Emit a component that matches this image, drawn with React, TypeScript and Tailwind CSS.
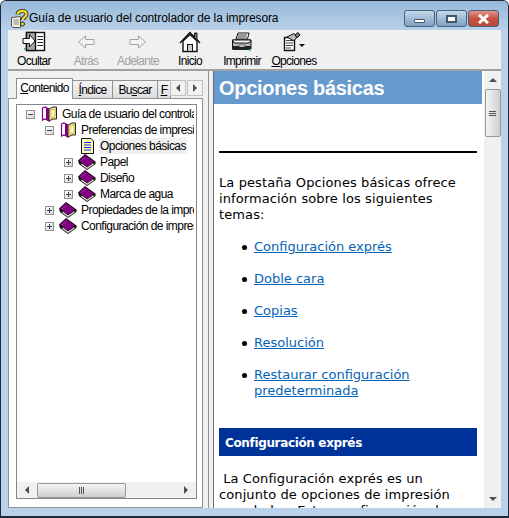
import type { ReactNode } from "react";

const ui = "font-['Liberation_Sans',Arial,sans-serif]";

const HelpIcon = () => (
  <svg width="20" height="20" viewBox="0 0 20 20">
    <path d="M1.5 8.5 L10.5 7.5 V18.5 H3 L1.5 17 Z" fill="#f4efe0" stroke="#555" />
    <path d="M3.5 11 H9 M3.5 13 H9 M3.5 15 H9" stroke="#888" />
    <path d="M7.5 5.5 C8 1.5 16.5 .5 16.5 5 C16.5 8 13 8 12.5 11" fill="none" stroke="#222" strokeWidth="4" />
    <path d="M7.5 5.5 C8 1.5 16.5 .5 16.5 5 C16.5 8 13 8 12.5 11" fill="none" stroke="#f2d92c" strokeWidth="2.4" />
    <circle cx="12.5" cy="15" r="2" fill="#f2d92c" stroke="#222" />
  </svg>
);

const HideIcon = () => (
  <svg width="24" height="22" viewBox="0 0 24 22">
    <rect x="4.5" y="1.5" width="18" height="18" fill="#fff" stroke="#111" strokeWidth="1.4" />
    <rect x="4.5" y="1.5" width="9" height="18" fill="#a8a8a8" stroke="#111" strokeWidth="1.4" />
    <path d="M15.5 5.5 H21 M15.5 8.5 H21 M15.5 11.5 H21 M15.5 14.5 H21" stroke="#222" />
    <path d="M1 7.5 H7.5 V3.5 L13 10 L7.5 16 V12.5 H1 Z" fill="#fff" stroke="#111" />
    <rect x="2" y="17" width="2" height="2" fill="#5cb85c" />
  </svg>
);

const ArrowIcon = ({ right }: { right?: boolean }) => (
  <svg width="18" height="14" viewBox="0 0 18 14">
    <path
      d={right ? "M1 4.5 H9.5 V1 L16.5 7 L9.5 13 V9.5 H1 Z" : "M17 4.5 H8.5 V1 L1.5 7 L8.5 13 V9.5 H17 Z"}
      fill="#f3f3f3"
      stroke="#a4a4a4"
    />
  </svg>
);

const HomeIcon = () => (
  <svg width="22" height="22" viewBox="0 0 22 22">
    <path d="M1 12 L11 1.5 L21 12" fill="#fff" stroke="#111" strokeWidth="1.4" />
    <path d="M15.5 6 V2 H18 V9" fill="#777" stroke="#111" />
    <path d="M4 10 V20.5 H18 V10 L11 3.5 Z" fill="#fff" stroke="#111" strokeWidth="1.4" />
    <rect x="8.5" y="13.5" width="5" height="7" fill="#ccc" stroke="#111" />
  </svg>
);

const PrinterIcon = () => (
  <svg width="22" height="20" viewBox="0 0 22 20">
    <path d="M5 7 L7 1 H18 L16.5 7 Z" fill="#fff" stroke="#111" />
    <path d="M7 3 H16 M6.5 5 H15.5" stroke="#333" />
    <path d="M1.5 8 H20 V17 H1.5 Z" fill="#bdbdbd" stroke="#111" />
    <path d="M1.5 8 H20 L18 11 H3 Z" fill="#fff" stroke="#111" />
    <rect x="1.5" y="14" width="18.5" height="4" fill="#222" />
    <rect x="8" y="13" width="6" height="2" fill="#eee" stroke="#111" strokeWidth=".5" />
    <rect x="18" y="17" width="2" height="2" fill="#33b5c9" />
  </svg>
);

const OptionsIcon = () => (
  <svg width="26" height="20" viewBox="0 0 26 20">
    <path d="M3.5 5.5 H13.5 V18.5 H3.5 Z" fill="#fff" stroke="#111" strokeWidth="1.4" />
    <path d="M5 8.5 H12 M5 11 H12 M5 13.5 H12 M5 16 H10" stroke="#444" />
    <path d="M6 5 L13 1.5 L16 5 L13 9 Z" fill="#bbb" stroke="#111" />
    <path d="M14 3 L17 .5 L19 3 L16 6 Z" fill="#777" stroke="#111" />
    <path d="M18 12 H24 L21 15 Z" fill="#111" />
  </svg>
);

const ClosedBook = () => (
  <svg width="18" height="16" viewBox="0 0 18 16">
    <path d="M0 6.5 L7 0 L17.5 7.5 V10 L9 16 L1 10 Z" fill="#111" />
    <path d="M1.2 6.5 L7 1.2 L16 7.5 L9 13 Z" fill="#800080" />
    <path d="M3.5 10 L9 14.2 L15.5 9.7" fill="none" stroke="#e8e8e8" strokeWidth="1.2" />
    <path d="M3 7 L7.5 3" stroke="#a830a8" />
  </svg>
);

const OpenBook = () => (
  <svg width="17" height="16" viewBox="0 0 17 16">
    <path d="M1.5 2 L4 1 L8 3 V15 L4 13 L1.5 14 Z" fill="#fff" stroke="#800080" strokeWidth="1.2" />
    <path d="M8 3 L12 1 H15.5 V13 H12 L8 15 Z" fill="#f5e884" stroke="#222" />
    <path d="M5 1.5 C7 2 8 3 8 4 V15 L5 13 Z" fill="#800080" />
    <path d="M10 4 L14 3 V11 L10 12 Z" fill="#fff7b0" stroke="#a89b3c" strokeWidth=".6" />
  </svg>
);

const Page = () => (
  <svg width="13" height="16" viewBox="0 0 13 16">
    <path d="M.5 .5 H10 L12.5 3 V15.5 H.5 Z" fill="#fffbb8" stroke="#111" />
    <path d="M3 4.5 H10 M3 7 H10 M3 9.5 H10 M3 12 H10" stroke="#1030d0" strokeWidth="1.2" />
  </svg>
);

const Expander = ({ open }: { open?: boolean }) => (
  <span className="relative flex h-[9px] w-[9px] shrink-0 items-center justify-center border border-[#919191] bg-gradient-to-br from-white to-[#d8d8d0]">
    <span className="h-px w-[5px] bg-[#33406a]" />
    {!open && <span className="absolute h-[5px] w-px bg-[#33406a]" />}
  </span>
);

type Node = { label: string; level: number; kind: "open" | "closed" | "page"; selected?: boolean };

const tree: Node[] = [
  { label: "Guía de usuario del controlador de la impresora", level: 0, kind: "open" },
  { label: "Preferencias de impresión", level: 1, kind: "open" },
  { label: "Opciones básicas", level: 2, kind: "page", selected: true },
  { label: "Papel", level: 2, kind: "closed" },
  { label: "Diseño", level: 2, kind: "closed" },
  { label: "Marca de agua", level: 2, kind: "closed" },
  { label: "Propiedades de la impresora", level: 1, kind: "closed" },
  { label: "Configuración de impresión", level: 1, kind: "closed" },
];

const indents = ["pl-[9px]", "pl-[28px]", "pl-[47px]"];

const TreeRow = ({ node }: { node: Node }) => (
  <div className={`flex h-4 items-center whitespace-nowrap ${indents[node.level]}`}>
    <span className="flex w-[14px] shrink-0 items-center">
      {node.kind !== "page" && <Expander open={node.kind === "open"} />}
    </span>
    <span className="flex w-[18px] shrink-0 justify-center">
      {node.kind === "open" && <OpenBook />}
      {node.kind === "closed" && <ClosedBook />}
      {node.kind === "page" && <Page />}
    </span>
    <span className={`ml-[3px] px-px leading-4 ${node.selected ? "bg-[#f0f0f0]" : ""}`}>{node.label}</span>
  </div>
);

const ToolButton = ({ icon, label, muted, hotkey }: { icon: ReactNode; label: string; muted?: boolean; hotkey?: boolean }) => (
  <div className="flex w-[52px] flex-col items-center">
    <div className="flex h-[22px] items-center justify-center">{icon}</div>
    <span className={`mt-[1px] text-[12px] leading-[15px] tracking-[-0.7px] ${muted ? "text-[#a0a0a0]" : "text-black"}`}>
      {hotkey ? <span className="underline">{label[0]}</span> : label[0]}
      {label.slice(1)}
    </span>
  </div>
);

const Tab = ({ label, width, active }: { label: ReactNode; width: string; active?: boolean }) => (
  <div
    className={`flex shrink-0 justify-center overflow-hidden border border-[#919191] ${width} ${
      active
        ? "z-10 -mb-px h-[21px] border-b-0 bg-white pt-[1px]"
        : "-ml-px mt-[2px] h-[18px] border-b-0 bg-gradient-to-b from-[#f4f4f4] to-[#dedede] pt-[1px]"
    }`}
  >
    <span className="text-[12px] leading-[17px] tracking-[-0.7px]">{label}</span>
  </div>
);

const SmallArrow = ({ dir }: { dir: "left" | "right" | "up" | "down" }) => {
  const d = {
    left: "M4 0 V8 L0 4 Z",
    right: "M0 0 V8 L4 4 Z",
    up: "M0 4 H8 L4 0 Z",
    down: "M0 0 H8 L4 4 Z",
  }[dir];
  return (
    <svg width={dir === "left" || dir === "right" ? 4 : 8} height={dir === "left" || dir === "right" ? 8 : 4}>
      <path d={d} fill="#4a5058" />
    </svg>
  );
};

const Grip = ({ vertical }: { vertical?: boolean }) => (
  <div className={`flex ${vertical ? "flex-col gap-px" : "gap-px"}`}>
    {[0, 1, 2].map((i) => (
      <span key={i} className={vertical ? "h-px w-[7px] bg-[#555]" : "h-[7px] w-px bg-[#555]"} />
    ))}
  </div>
);

const WinButton = ({ children, close }: { children: ReactNode; close?: boolean }) => (
  <div
    className={`flex h-[17px] w-[31px] items-center justify-center rounded-[3px] border border-[#4a5f78] ${
      close ? "bg-gradient-to-b from-[#e0958a] via-[#c84f3f] to-[#b94a3c]" : "bg-gradient-to-b from-[#c6d9ec] via-[#a0bcd8] to-[#7f9fc2]"
    }`}
  >
    {children}
  </div>
);

const links = [
  ["Configuración exprés"],
  ["Doble cara"],
  ["Copias"],
  ["Resolución"],
  ["Restaurar configuración", "predeterminada"],
];

export default function App() {
  return (
    <div className={`flex h-[518px] w-[509px] flex-col overflow-hidden rounded-t-[6px] border border-b-2 border-[#1c2a3a] bg-[#b9d1ea] ${ui}`}>
      <div className="flex h-[29px] shrink-0 items-start bg-gradient-to-b from-[#97b9d8] to-[#b9d1ea] pl-[9px] pr-[9px] pt-[9px]">
        <div className="-mt-[1px]">
          <HelpIcon />
        </div>
        <span className="-ml-[1px] text-[12px] leading-[17px] tracking-[-0.1px] text-black">
          Guía de usuario del controlador de la impresora
        </span>
        <div className="ml-auto flex gap-[1px]">
          <WinButton>
            <span className="mt-[4px] h-[4px] w-[11px] rounded-[1px] border border-[#45556a] bg-white" />
          </WinButton>
          <WinButton>
            <span className="h-[8px] w-[11px] border-2 border-[#45556a] bg-white" />
          </WinButton>
          <WinButton close>
            <svg width="13" height="10" viewBox="0 0 13 10">
              <path d="M2 1 L11 9 M11 1 L2 9" stroke="#fff" strokeWidth="3" />
            </svg>
          </WinButton>
        </div>
      </div>

      <div className="mx-[7px] flex min-h-0 flex-1 flex-col">
        <div className="flex h-[41px] shrink-0 items-start border-b-2 border-[#a0a0a0] bg-[#f0f0f0] pt-[1px]">
          <ToolButton icon={<HideIcon />} label="Ocultar" />
          <ToolButton icon={<ArrowIcon />} label="Atrás" muted />
          <ToolButton icon={<ArrowIcon right />} label="Adelante" muted />
          <ToolButton icon={<HomeIcon />} label="Inicio" />
          <ToolButton icon={<PrinterIcon />} label="Imprimir" />
          <ToolButton icon={<OptionsIcon />} label="Opciones" hotkey />
        </div>

        <div className="flex min-h-0 flex-1">
          <div className="relative flex w-[195px] shrink-0 flex-col bg-[#f0f0f0] pt-[6px]">
            <div className="flex h-[21px] shrink-0 items-end pl-[8px]">
              <Tab active width="w-[57px]" label={<><span className="underline">C</span>ontenido</>} />
              <Tab width="w-[41px]" label={<><span className="underline">Í</span>ndice</>} />
              <Tab width="w-[46px]" label={<>Bu<span className="underline">s</span>car</>} />
              <Tab width="w-[14px]" label={<span className="underline">F</span>} />
            </div>
            <div className="absolute left-[162px] top-[9px] flex gap-px">
              <div className="flex h-[16px] w-[16px] items-center justify-center border border-[#c0c0c0] bg-[#f2f2f2]">
                <SmallArrow dir="left" />
              </div>
              <div className="flex h-[16px] w-[16px] items-center justify-center border border-[#c0c0c0] bg-[#f2f2f2]">
                <SmallArrow dir="right" />
              </div>
            </div>
            <div className="flex min-h-0 flex-1 flex-col border border-[#919191] bg-white p-[5px] pb-[8px] pl-[7px]">
              <div className="flex min-h-0 flex-1 flex-col overflow-hidden border border-[#828790] bg-white">
                <div className="mr-[2px] min-h-0 flex-1 overflow-hidden pt-[1px] text-[12px] tracking-[-0.55px] text-black">
                  {tree.map((node) => (
                    <TreeRow key={node.label} node={node} />
                  ))}
                </div>
                <div className="flex h-[16px] shrink-0 items-center bg-[#f0f0f0]">
                  <div className="flex w-[20px] justify-center">
                    <SmallArrow dir="left" />
                  </div>
                  <div className="flex h-[15px] w-[89px] items-center justify-center rounded-[2px] border border-[#979797] bg-gradient-to-b from-[#f4f4f4] to-[#cfcfcf]">
                    <Grip />
                  </div>
                  <div className="ml-auto flex w-[20px] justify-center">
                    <SmallArrow dir="right" />
                  </div>
                </div>
              </div>
            </div>
          </div>

          <div className="w-[6px] shrink-0 border-r border-[#919191] bg-[#f0f0f0]" />
          <div className="w-[4px] shrink-0 bg-[#f0f0f0]" />

          <div className="flex min-w-0 flex-1 border-l border-[#6d6d6d] bg-white">
            <div className="min-w-0 flex-1 overflow-hidden font-['DejaVu_Sans',sans-serif] text-[13px] leading-4 text-black">
              <div className="mr-[2px] flex h-[33px] items-center bg-[#6699cc] pl-[5px] font-['Liberation_Sans',sans-serif] text-[20px] font-bold tracking-[-0.3px] text-white">
                Opciones básicas
              </div>
              <div className="px-[5px]">
                <div className="mb-[22px] mt-[47px] h-[2px] w-[258px] bg-black" />
                <p className="w-[258px] tracking-[0.1px]">
                  La pestaña Opciones básicas ofrece información sobre los siguientes temas:
                </p>
                <ul className="mt-[16px] flex flex-col gap-4 pl-[35px]">
                  {links.map((lines) => (
                    <li key={lines[0]} className="relative text-[#0563b8] underline">
                      <span className="absolute -left-[12px] top-[6px] h-[5px] w-[5px] rounded-full bg-black" />
                      {lines.map((line) => (
                        <div key={line}>{line}</div>
                      ))}
                    </li>
                  ))}
                </ul>
                <div className="mt-[29px] flex h-[28px] w-[258px] items-center bg-[#003399] pl-[6px] pt-[1px] text-[12px] font-bold tracking-[-0.35px] text-white">
                  Configuración exprés
                </div>
                <p className="mt-[15px] w-[258px] tracking-[0.1px]">
                  &nbsp;La Configuración exprés es un conjunto de opciones de impresión guardadas. Estas configuración de
                </p>
              </div>
            </div>
            <div className="flex w-[17px] shrink-0 flex-col items-center bg-[#f0f0f0]">
              <div className="flex h-[18px] items-center justify-center">
                <SmallArrow dir="up" />
              </div>
              <div className="flex h-[48px] w-[16px] items-center justify-center rounded-[2px] border border-[#979797] bg-gradient-to-r from-[#f4f4f4] to-[#cfcfcf]">
                <Grip vertical />
              </div>
              <div className="mt-auto flex h-[18px] items-center justify-center">
                <SmallArrow dir="down" />
              </div>
            </div>
          </div>
        </div>
      </div>
      <div className="h-[8px] shrink-0" />
    </div>
  );
}
